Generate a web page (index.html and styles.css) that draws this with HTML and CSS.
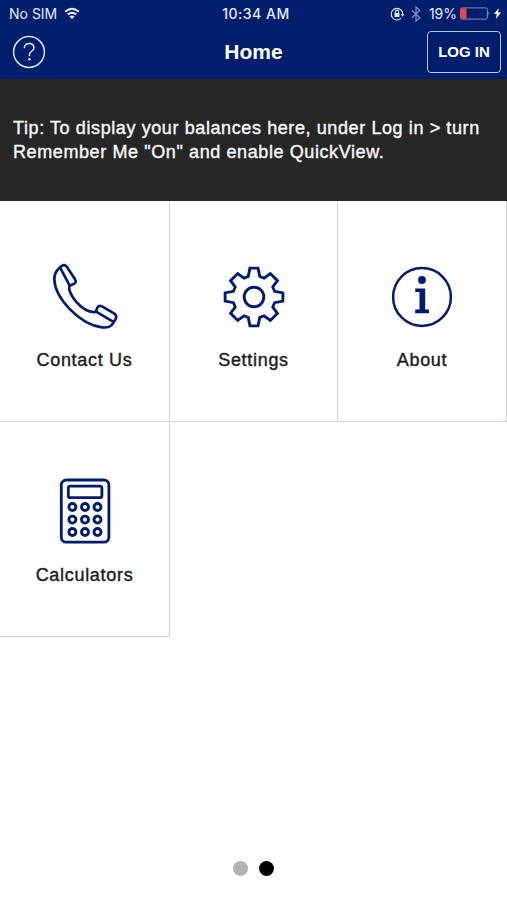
FILE: index.html
```html
<!DOCTYPE html>
<html lang="en">
<head>
<meta charset="utf-8">
<title>Home</title>
<link rel="stylesheet" href="styles.css">
</head>
<body>
<header class="header">
  <div class="status">
    <div class="status-left">
      <span class="carrier">No SIM</span>
      <svg class="wifi" width="16" height="13" viewBox="0 0 16 13" fill="none" stroke="#e8ecff" stroke-width="2"><path d="M1.2 4.8Q8-1.2 14.8 4.8M3.7 7.6Q8 3.8 12.3 7.6"/><path d="M5.4 9.5Q8 7.4 10.6 9.5L8 12Z" fill="#e8ecff" stroke="none"/></svg>
    </div>
    <span class="time">10:34 AM</span>
    <div class="status-right">
      <svg width="15" height="14" viewBox="0 0 15 14" fill="none" stroke="#dfe5ff" stroke-width="1.1"><path d="M12.2 4.6A5.8 5.8 0 1 0 11 11.4M12.2 4.4 12.7 7.5"/><path d="M10.8 7.2h3.6l-1.8 2.5z" fill="#dfe5ff" stroke="none"/><path d="M4.5 6h5v4h-5z" fill="#dfe5ff" stroke="none"/><path d="M5.4 6.3V4.7a1.6 1.6 0 0 1 3.2 0v1.6"/></svg>
      <svg class="bluetooth" width="10" height="16" viewBox="0 0 10 16" fill="none" stroke="#8291c6" stroke-width="1.2"><path d="M.8 4.2 8.8 11.8 5 15V1L8.8 4.2.8 11.8"/></svg>
      <span class="percent">19%</span>
      <svg class="battery" width="31" height="13" viewBox="0 0 31 13"><rect x=".6" y=".9" width="26.8" height="11.2" rx="1.5" fill="none" stroke="#7e8bc0"/><path d="M1 1.2h5.5v10.6H1z" fill="#f6403c"/><path d="M28.6 4.3q1.8 2.2 0 4.4z" fill="#b5c0e8"/></svg>
      <svg class="bolt" width="7" height="11" viewBox="0 0 7 11"><path d="M4.7 0 0 6h2.8L1.8 11 7 4.5H4z" fill="#fff"/></svg>
    </div>
  </div>
  <div class="nav">
    <svg class="help" width="34" height="34" viewBox="0 0 34 34" fill="none" stroke="#dce4ff" stroke-width="1.5"><circle cx="17" cy="17" r="15.4"/><path d="M12.3 13.2C12.3 10.2 14.3 8.6 17.1 8.6C20 8.6 21.9 10.3 21.9 12.9C21.9 16.1 17.4 16.5 17.4 19.8V21.2"/><circle cx="17.4" cy="24.2" r="1.3" fill="#dce4ff" stroke="none"/></svg>
    <h1 class="title">Home</h1>
    <button class="login"><span>LOG IN</span></button>
  </div>
</header>
<section class="tip">
  <p>Tip: To display your balances here, under Log in &gt; turn</p>
  <p>Remember Me "On" and enable QuickView.</p>
</section>
<main class="grid">
  <a class="tile">
    <svg width="70" height="70" viewBox="60 36 210 210" fill="none" stroke="#001b70" stroke-width="8" stroke-linejoin="round" stroke-linecap="round"><path d="M119 107C109 127 156 191 197 186L202 173Q206 165 216 169L252 190Q262 196 257 207L249 220Q240 235 216 232C148 224 74 143 73 87Q73 67 88 54L95 48Q104 42 111 51L135 88Q141 98 131 102Z"/><path d="M92 56 119 107M197 184 249 215"/></svg>
    <span class="label">Contact Us</span>
  </a>
  <a class="tile">
    <svg width="70" height="70" viewBox="-34.3 -34.3 68.6 68.6" fill="none" stroke="#001b70" stroke-width="2.8"><path d="M-4-28.3H4L5.6-20.2 9.8-18.4 16-23 23-16 18.4-9.8 20.2-5.6 28.3-4V4L20.2 5.6 18.4 9.8 23 16 16 23 9.8 18.4 5.6 20.2 4 28.3H-4L-5.6 20.2-9.8 18.4-16 23-23 16-18.4 9.8-20.2 5.6-28.3 4V-4L-20.2-5.6-18.4-9.8-23-16-16-23-9.8-18.4-5.6-20.2Z"/><circle r="9.6"/></svg>
    <span class="label">Settings</span>
  </a>
  <a class="tile">
    <svg width="70" height="70" viewBox="-35 -35 70 70"><circle r="28.9" fill="none" stroke="#001b70" stroke-width="2.5"/><circle cy="-17" r="3.9" fill="#001b70"/><path d="M-6.8-8.6H3.2V12.5H7V16.2H-6.8V12.5H-2.5V-4.9H-6.8Z" fill="#001b70"/></svg>
    <span class="label">About</span>
  </a>
  <a class="tile second-row">
    <svg width="70" height="70" viewBox="-35 -35 70 70" fill="none" stroke="#001b70" stroke-width="2.8"><rect x="-23.7" y="-31" width="47.6" height="62.2" rx="5"/><rect x="-16.7" y="-24.9" width="33.6" height="11.6" rx="2"/><g stroke-width="2.9"><circle cx="-12.6" cy="-4" r="3.5"/><circle cx="0" cy="-4" r="3.5"/><circle cx="12.5" cy="-4" r="3.5"/><circle cx="-12.6" cy="8.6" r="3.5"/><circle cx="0" cy="8.6" r="3.5"/><circle cx="12.5" cy="8.6" r="3.5"/><circle cx="-12.6" cy="21" r="3.5"/><circle cx="0" cy="21" r="3.5"/><circle cx="12.5" cy="21" r="3.5"/></g></svg>
    <span class="label">Calculators</span>
  </a>
</main>
<footer class="pager"><span class="dot"></span><span class="dot active"></span></footer>
</body>
</html>
```
FILE: styles.css
```css
* { box-sizing: border-box; }
body {
  margin: 0;
  height: 900px;
  display: flex;
  flex-direction: column;
  overflow: hidden;
  background: #fff;
  font-family: "Liberation Sans", Arial, sans-serif;
}
svg { display: block; flex: none; }
.header { height: 79px; background: #001e6c; color: #fff; }
.status {
  height: 27px;
  display: grid;
  grid-template-columns: 1fr auto 1fr;
  align-items: center;
  padding: 0 6px 0 9px;
  font: 14px/16px Inter, sans-serif;
  color: #e6ebff;
}
.status-left, .status-right { display: flex; align-items: center; }
.status-right { justify-content: flex-end; }
.wifi { margin-left: 7px; }
.time { font-weight: 500; letter-spacing: .5px; margin-left: 2px; }
.bluetooth { margin: 0 8px 0 6px; }
.battery { margin-left: 3px; }
.bolt { margin-left: 3px; }
.nav {
  height: 50px;
  display: grid;
  grid-template-columns: 1fr auto 1fr;
  align-items: center;
  padding: 0 6px 0 12px;
}
.title { margin: 0 0 0 -6px; font: bold 21px/24px "Liberation Sans", sans-serif; }
.login {
  justify-self: end;
  width: 74px;
  height: 42px;
  padding: 0;
  border: 1.5px solid #b8c5f2;
  border-radius: 4px;
  background: transparent;
  color: #fff;
  font: bold 15px/18px "Liberation Sans", sans-serif;
}
.tip {
  height: 122px;
  padding: 37px 13px 0;
  background: #262626;
  color: #f6f6f6;
  font-size: 18px;
  line-height: 24px;
  letter-spacing: .6px;
  white-space: nowrap;
  -webkit-text-stroke: .4px #f6f6f6;
}
.tip p { margin: 0; }
.grid {
  display: grid;
  grid-template-columns: 170px 168px 169px;
  grid-template-rows: 221px 215px;
}
.tile {
  display: flex;
  flex-direction: column;
  align-items: center;
  padding-top: 61px;
  border-right: 1px solid #cdd3d7;
  border-bottom: 1px solid #cdd3d7;
}
.second-row { padding-top: 55px; }
.second-row svg { margin-top: -1px; margin-bottom: 1px; }
.label {
  margin-top: 17px;
  font-size: 18px;
  line-height: 22px;
  letter-spacing: .7px;
  color: #1c1c1c;
  -webkit-text-stroke: .4px #1c1c1c;
}
.pager { margin-top: auto; height: 39px; display: flex; justify-content: center; gap: 11px; }
.dot { width: 15px; height: 15px; border-radius: 50%; background: #b3b3b3; }
.active { background: #000; }
```
